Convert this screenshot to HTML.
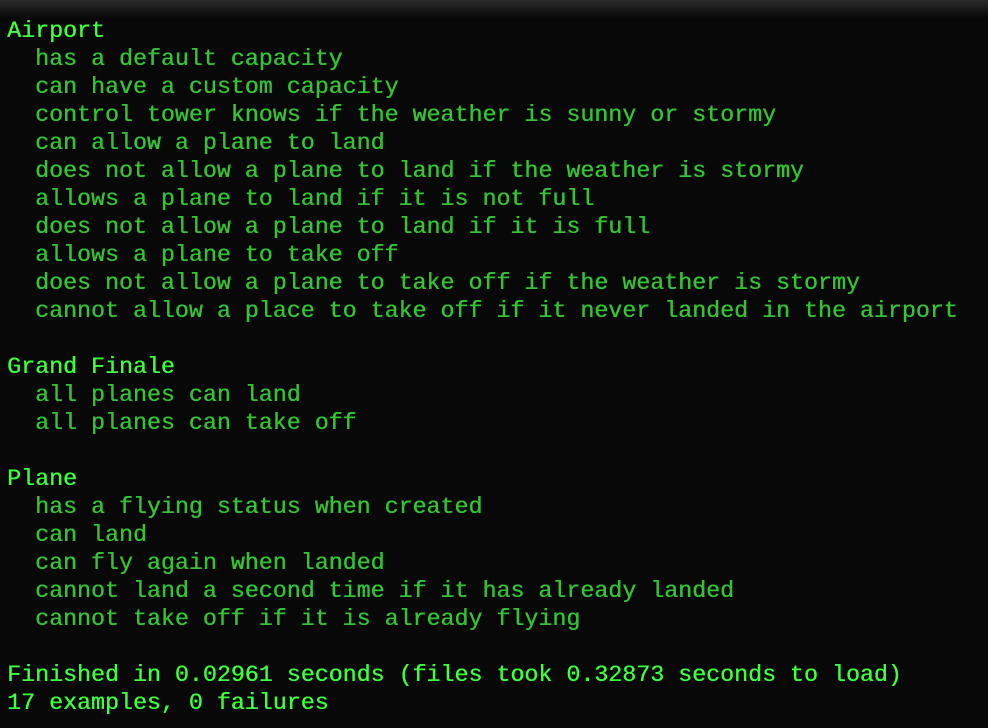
<!DOCTYPE html>
<html><head><style>
html,body{margin:0;padding:0;background:#080808;width:988px;height:728px;overflow:hidden}
.top{position:absolute;left:0;top:0;width:988px;height:18px;background:linear-gradient(#2a2a2a,#080808)}
pre{position:absolute;left:7px;top:17px;margin:0;font-family:"Liberation Mono",monospace;font-size:23.3px;line-height:28px;color:#35c335;letter-spacing:0;text-shadow:0.4px 0 0 currentColor}
b{font-weight:normal;color:#3dff3d}
</style></head><body><div class="top"></div>
<pre><b>Airport</b>
  has a default capacity
  can have a custom capacity
  control tower knows if the weather is sunny or stormy
  can allow a plane to land
  does not allow a plane to land if the weather is stormy
  allows a plane to land if it is not full
  does not allow a plane to land if it is full
  allows a plane to take off
  does not allow a plane to take off if the weather is stormy
  cannot allow a place to take off if it never landed in the airport

<b>Grand Finale</b>
  all planes can land
  all planes can take off

<b>Plane</b>
  has a flying status when created
  can land
  can fly again when landed
  cannot land a second time if it has already landed
  cannot take off if it is already flying

<b>Finished in 0.02961 seconds (files took 0.32873 seconds to load)</b>
<b>17 examples, 0 failures</b></pre>
</body></html>
